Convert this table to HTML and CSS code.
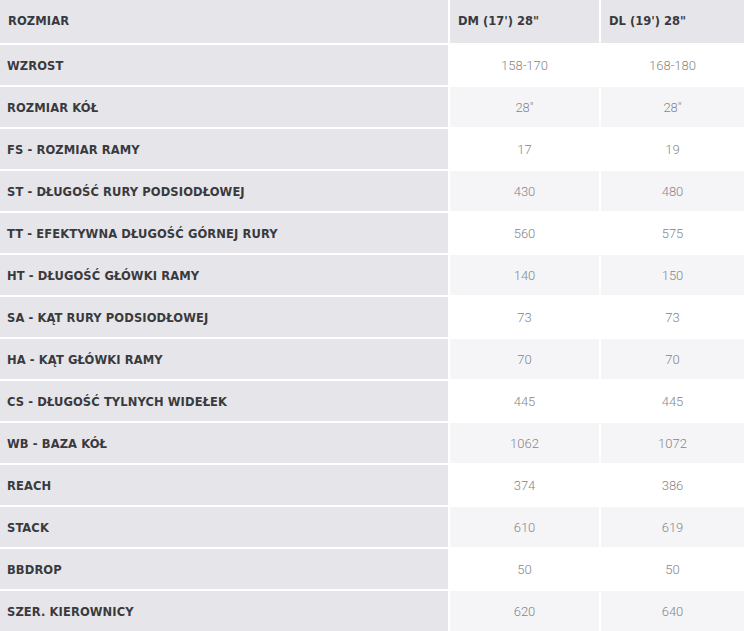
FILE: index.html
```html
<!DOCTYPE html>
<html lang="pl">
<head>
<meta charset="utf-8">
<link rel="stylesheet" href="styles.css">
</head>
<body>
<div class="table">
  <div class="row head">
    <div class="cell label hl">ROZMIAR</div>
    <div class="cell hcol">DM (17') 28"</div>
    <div class="cell hcol">DL (19') 28"</div>
  </div>
  <div class="row odd"><div class="cell label">WZROST</div><div class="cell val">158-170</div><div class="cell val">168-180</div></div>
  <div class="row even"><div class="cell label">ROZMIAR KÓŁ</div><div class="cell val">28"</div><div class="cell val">28"</div></div>
  <div class="row odd"><div class="cell label">FS - ROZMIAR RAMY</div><div class="cell val">17</div><div class="cell val">19</div></div>
  <div class="row even"><div class="cell label">ST - DŁUGOŚĆ RURY PODSIODŁOWEJ</div><div class="cell val">430</div><div class="cell val">480</div></div>
  <div class="row odd"><div class="cell label">TT - EFEKTYWNA DŁUGOŚĆ GÓRNEJ RURY</div><div class="cell val">560</div><div class="cell val">575</div></div>
  <div class="row even"><div class="cell label">HT - DŁUGOŚĆ GŁÓWKI RAMY</div><div class="cell val">140</div><div class="cell val">150</div></div>
  <div class="row odd"><div class="cell label">SA - KĄT RURY PODSIODŁOWEJ</div><div class="cell val">73</div><div class="cell val">73</div></div>
  <div class="row even"><div class="cell label">HA - KĄT GŁÓWKI RAMY</div><div class="cell val">70</div><div class="cell val">70</div></div>
  <div class="row odd"><div class="cell label">CS - DŁUGOŚĆ TYLNYCH WIDEŁEK</div><div class="cell val">445</div><div class="cell val">445</div></div>
  <div class="row even"><div class="cell label">WB - BAZA KÓŁ</div><div class="cell val">1062</div><div class="cell val">1072</div></div>
  <div class="row odd"><div class="cell label">REACH</div><div class="cell val">374</div><div class="cell val">386</div></div>
  <div class="row even"><div class="cell label">STACK</div><div class="cell val">610</div><div class="cell val">619</div></div>
  <div class="row odd"><div class="cell label">BBDROP</div><div class="cell val">50</div><div class="cell val">50</div></div>
  <div class="row even"><div class="cell label">SZER. KIEROWNICY</div><div class="cell val">620</div><div class="cell val">640</div></div>
</div>
</body>
</html>
```
FILE: styles.css
```css
html, body {
  margin: 0;
  padding: 0;
  background: #ffffff;
}
.table {
  width: 744px;
  display: flex;
  flex-direction: column;
  gap: 2px;
}
.row {
  display: grid;
  grid-template-columns: 448px 149px 143px;
  column-gap: 2px;
  height: 40px;
}
.row.head {
  height: 43px;
}
.cell {
  display: flex;
  align-items: center;
  box-sizing: border-box;
}
.label {
  background: #e6e6ea;
  padding-left: 7px;
  padding-top: 1px;
  font-family: "DejaVu Sans Condensed", "DejaVu Sans", sans-serif;
  font-weight: bold;
  font-size: 12.8px;
  color: #3a3a3e;
  letter-spacing: 0.1px;
}
.hl {
  padding-left: 8px;
  padding-top: 0;
  padding-bottom: 3px;
}
.hcol {
  background: #e6e6ea;
  padding-left: 8px;
  padding-bottom: 3px;
  font-family: "DejaVu Sans Condensed", "DejaVu Sans", sans-serif;
  font-weight: bold;
  font-size: 12.8px;
  color: #3a3a3e;
}
.val {
  justify-content: center;
  padding-top: 1px;
  font-family: Roboto, "Liberation Sans", sans-serif;
  font-weight: 300;
  font-size: 13px;
  color: #86868a;
}
.odd .val {
  background: #ffffff;
}
.even .val {
  background: #f5f5f7;
}
```
